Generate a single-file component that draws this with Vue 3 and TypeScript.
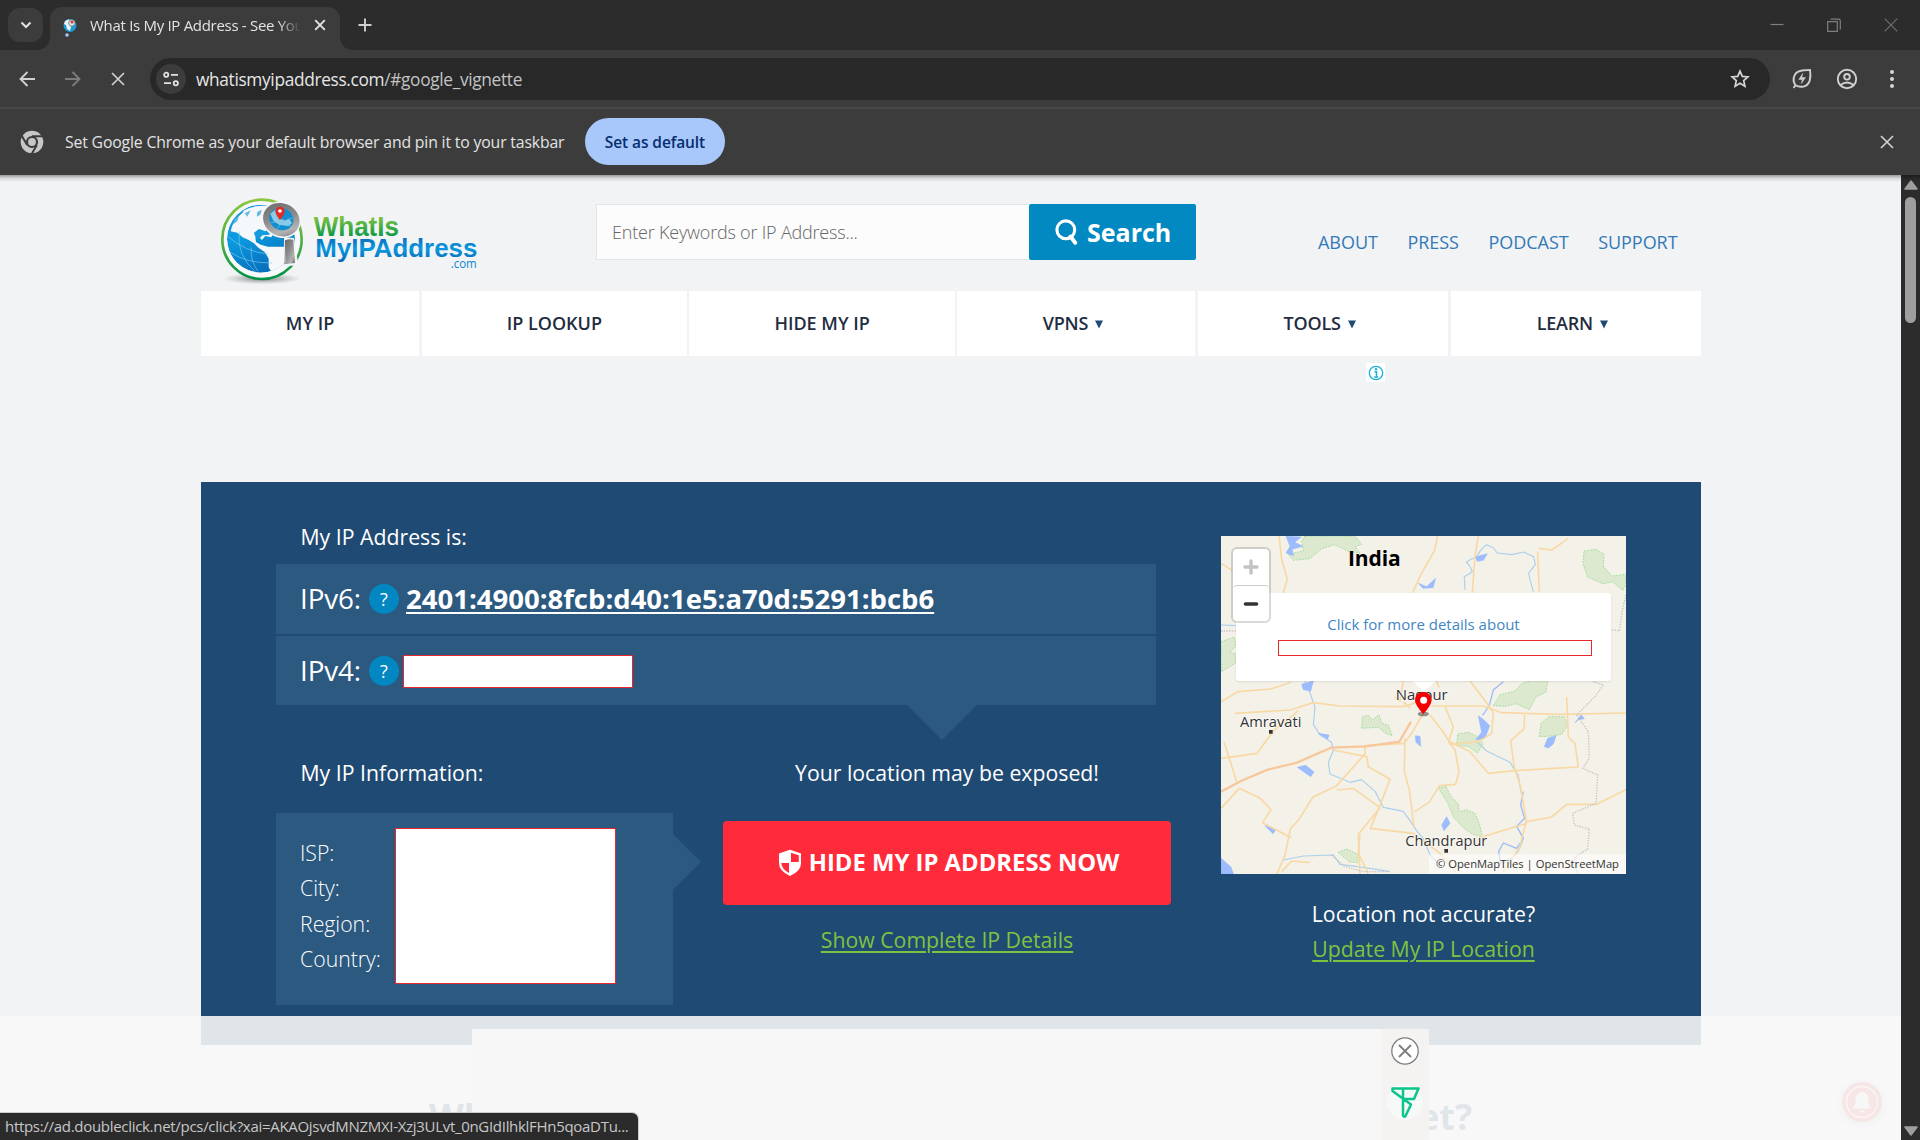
<script setup lang="ts">
interface NavItem {
  label: string
  width: number
  menu?: boolean
}

const links: string[] = ['ABOUT', 'PRESS', 'PODCAST', 'SUPPORT']

const nav: NavItem[] = [
  { label: 'MY IP', width: 218 },
  { label: 'IP LOOKUP', width: 265 },
  { label: 'HIDE MY IP', width: 265 },
  { label: 'VPNS', width: 238, menu: true },
  { label: 'TOOLS', width: 250, menu: true },
  { label: 'LEARN', width: 250, menu: true },
]

const infoLabels: string[] = ['ISP:', 'City:', 'Region:', 'Country:']
</script>

<template>
  <div class="window">
    <div class="tabstrip">
      <div class="tab-search">
        <svg width="12" height="8" viewBox="0 0 12 8"><path d="M1.500 1.500 6 6l4.500-4.500" fill="none" stroke="#e3e3e3" stroke-width="2" /></svg>
      </div>
      <div class="tab">
        <svg class="favicon" width="16" height="20" viewBox="0 0 16 20">
          <circle cx="8" cy="7.500" r="6.500" fill="#1d9ad6" />
          <path d="M3 3q4-3 6 0l-2 3 2 3-1 4-3-2-1-4-2-1z" fill="#eef4f6" />
          <circle cx="9.800" cy="5" r="3.200" fill="#d9e4ea" stroke="#777" stroke-width=".8" />
          <circle cx="10" cy="4" r="1.500" fill="#d63a2a" />
          <circle cx="5" cy="17" r="1.800" fill="#a8c7fa" />
        </svg>
        <span class="tab-title">What Is My IP Address - See Your</span>
        <svg class="tab-x" width="12" height="12" viewBox="0 0 12 12"><path d="m1.200 1.200 9.600 9.600m0-9.600-9.600 9.600" stroke="#e3e3e3" stroke-width="1.900" /></svg>
      </div>
      <svg class="plus" width="14" height="14" viewBox="0 0 14 14"><path d="M7 .5v13M.5 7h13" stroke="#d0d0d0" stroke-width="1.900" /></svg>
      <div class="win-buttons">
        <svg width="14" height="14" viewBox="0 0 14 14"><path d="M.5 6.500h13" stroke="#7f7f7f" stroke-width="1.200" /></svg>
        <svg width="14" height="14" viewBox="0 0 14 14"><path d="M.7 3.700h9.600v9.600H.7zM3.500 1.200h8q1.800 0 1.800 1.800v8.500" fill="none" stroke="#7f7f7f" stroke-width="1.200" /></svg>
        <svg width="14" height="14" viewBox="0 0 14 14"><path d="m.7.7 12.600 12.600m0-12.600L.7 13.300" stroke="#6f6f6f" stroke-width="1.200" /></svg>
      </div>
    </div>

    <div class="toolbar">
      <div class="nav-icons">
        <svg width="16" height="16" viewBox="0 0 16 16"><path d="M8.500 1 1.500 8l7 7M1.500 8H16" fill="none" stroke="#d0d0d0" stroke-width="1.900" /></svg>
        <svg width="16" height="16" viewBox="0 0 16 16"><path d="m7.500 1 7 7-7 7M14.500 8H0" fill="none" stroke="#7c7c7c" stroke-width="1.900" /></svg>
        <svg width="14" height="14" viewBox="0 0 14 14"><path d="m1 1 12 12M13 1 1 13" stroke="#d0d0d0" stroke-width="1.700" /></svg>
      </div>
      <div class="omnibox">
        <span class="site-info">
          <svg width="16" height="16" viewBox="0 0 16 16" fill="none" stroke="#e3e3e3" stroke-width="1.800">
            <circle cx="3.200" cy="3.800" r="2.100" /><path d="M8 3.800h7M1 12.200h7" /><circle cx="12.800" cy="12.200" r="2.100" />
          </svg>
        </span>
        <span class="url">whatismyipaddress.com<span>/#google_vignette</span></span>
        <svg class="star" width="20" height="20" viewBox="0 0 20 20"><path d="m10 2.200 2.300 5.200 5.600.5-4.200 3.700 1.200 5.600-4.900-2.900-4.900 2.900 1.200-5.600-4.200-3.700 5.600-.5z" fill="none" stroke="#d6d6d6" stroke-width="1.700" /></svg>
      </div>
      <div class="tool-icons">
        <svg width="22" height="22" viewBox="0 0 22 22" fill="none" stroke="#d0d0d0" stroke-width="1.900">
          <path d="M2.500 19.800 4.600 17.300Q2 14 2.700 9.800 4 3.500 11 2.500L19 1.900q1 6-.3 10.700-1.600 5-6.300 6-4.600.8-7.800-1.300" />
          <path d="m11.700 5.500-3.900 6h3.500l-1 4 4.200-6h-3.700z" fill="#d0d0d0" stroke-width=".5" />
        </svg>
        <svg width="22" height="22" viewBox="0 0 22 22" fill="none" stroke="#d0d0d0" stroke-width="1.900">
          <circle cx="11" cy="11" r="9.200" /><circle cx="11" cy="8.800" r="2.800" /><path d="M4.500 17q6.500-5 13 0" />
        </svg>
        <svg width="6" height="20" viewBox="0 0 6 20" fill="#d6d6d6"><circle cx="3" cy="3" r="2" /><circle cx="3" cy="10" r="2" /><circle cx="3" cy="17" r="2" /></svg>
      </div>
    </div>

    <div class="infobar">
      <svg class="chrome" width="24" height="24" viewBox="0 0 24 24">
        <circle cx="12" cy="12" r="11.300" fill="#c7c7c7" />
        <path d="M12 6.300h11M7.100 14.900 1.600 5.400M16.900 14.900l-5.500 9.500" stroke="#3c3c3c" stroke-width="2" />
        <circle cx="12" cy="12" r="5" fill="#c7c7c7" stroke="#3c3c3c" stroke-width="2.200" />
      </svg>
      <span class="info-text">Set Google Chrome as your default browser and pin it to your taskbar</span>
      <button class="set-default"><span>Set as default</span></button>
      <svg class="info-x" width="14" height="14" viewBox="0 0 14 14"><path d="m1 1 12 12M13 1 1 13" stroke="#d0d0d0" stroke-width="1.700" /></svg>
    </div>

    <div class="viewport">
      <main class="site">
        <header class="header">
          <svg class="logo" width="290" height="100" viewBox="0 0 870 300">
            <defs>
              <linearGradient id="ring" x1="0" y1="0" x2="0" y2="1"><stop offset="0" stop-color="#8cc63f" /><stop offset=".55" stop-color="#4fae45" /><stop offset="1" stop-color="#009245" /></linearGradient>
              <linearGradient id="sea" x1="0" y1="0" x2=".4" y2="1"><stop offset="0" stop-color="#1b9ddd" /><stop offset=".5" stop-color="#0a9ae0" /><stop offset="1" stop-color="#0871bd" /></linearGradient>
              <linearGradient id="metal" x1="0" y1="0" x2="1" y2="1"><stop offset="0" stop-color="#666" /><stop offset=".45" stop-color="#8b8b8b" /><stop offset=".75" stop-color="#b3b3b3" /><stop offset="1" stop-color="#666" /></linearGradient>
              <linearGradient id="green" gradientUnits="userSpaceOnUse" x1="0" y1="75" x2="0" y2="138"><stop offset="0" stop-color="#8cc63f" /><stop offset="1" stop-color="#0f9a47" /></linearGradient>
              <linearGradient id="blue" gradientUnits="userSpaceOnUse" x1="0" y1="145" x2="0" y2="215"><stop offset="0" stop-color="#0a6fbd" /><stop offset=".45" stop-color="#0a9ae0" /><stop offset="1" stop-color="#0765b2" /></linearGradient>
              <radialGradient id="shade"><stop offset="0" stop-color="#555" stop-opacity=".75" /><stop offset="1" stop-color="#888" stop-opacity="0" /></radialGradient>
              <clipPath id="globe"><circle cx="153" cy="146" r="102" /></clipPath>
            </defs>
            <ellipse cx="156" cy="266" rx="118" ry="17" fill="url(#shade)" />
            <circle cx="156" cy="148" r="119" fill="#f7f9fb" stroke="url(#ring)" stroke-width="8" />
            <g clip-path="url(#globe)">
              <circle cx="153" cy="146" r="102" fill="url(#sea)" />
              <path d="M100 62q40-22 90-12v60l-14 12 14 8-6 12-18-4-10 12-14-14-6 6 2 14 14 8 22 6h76v60l-20 30-34 14-8-22-12-20v-26l-12-20-18-12-14-14-16-10-18-8-16-14-20-4q4-30 38-58z" fill="#f4f8fa" />
              <path d="M74 87l13-9-5 16-13 9zM104 70l18-9-10 19zM142 66l13-7-4 15-11 6z" fill="#64b7e5" />
              <path d="M132 128l15-11 20 7 8-14 8 9-5 15-21 2-9 10-13-7z" fill="#149ade" />
              <path d="M55 140q50 45 118 52M58 185q50 35 128 34M88 125q-10 70 48 120M124 172q-4 40 20 72" fill="none" stroke="#7fc8ef" stroke-width="2" />
            </g>
            <path d="M222 142l30 2 13 82-42 3z" fill="#f4f6f8" />
            <ellipse cx="214" cy="89" rx="60" ry="54" fill="#f4f6f8" transform="rotate(25 214 89)" />
            <ellipse cx="214" cy="89" rx="56" ry="49" fill="url(#metal)" transform="rotate(25 214 89)" />
            <ellipse cx="214" cy="87" rx="37" ry="33" fill="#128fd1" transform="rotate(25 214 87)" />
            <path d="M181 71l19-15 20 8-8 23 12 6 14-6 8 13-12 8-27-4-17-12z" fill="#8fcbe9" />
            <path d="M183 98q34-8 60 12M202 116q18-28 46-32M190 84q28-2 51 21" fill="none" stroke="#82c7ea" stroke-width="2" />
            <path d="M210 91q-14-18-14-27a14 14 0 0 1 28 0q0 9-14 27z" fill="#e02c22" />
            <circle cx="210" cy="63" r="5.500" fill="#fff" />
            <path d="M225 151q12-5 25-2l5 70-32 4z" fill="url(#metal)" />
            <path d="M223 160l3 57" stroke="#fff" stroke-opacity=".35" stroke-width="4" />
            <g font-family="Liberation Sans, Arial, sans-serif">
              <text x="311" y="137" font-size="83" font-weight="700" textLength="256" lengthAdjust="spacingAndGlyphs" fill="url(#green)">WhatIs</text>
              <text x="316" y="202" font-size="80" font-weight="700" textLength="486" lengthAdjust="spacingAndGlyphs" fill="url(#blue)">MyIPAddress</text>
              <text x="722" y="233" font-size="38" font-family="Open Sans, sans-serif" textLength="78" lengthAdjust="spacingAndGlyphs" fill="#0f86cf">.com</text>
            </g>
          </svg>
          <div class="search">
            <div class="search-field">Enter Keywords or IP Address...</div>
            <button class="search-button">
              <svg width="24" height="26" viewBox="0 0 24 26"><circle cx="10.800" cy="10.800" r="8.900" fill="none" stroke="#fff" stroke-width="3.100" /><path d="m15.500 17.500 4.700 6.200" stroke="#fff" stroke-width="4" stroke-linecap="round" /></svg>
              <span>Search</span>
            </button>
          </div>
          <div class="links"><a v-for="l in links" :key="l">{{ l }}</a></div>
        </header>

        <nav class="nav">
          <div v-for="n in nav" :key="n.label" class="nav-item" :class="{ menu: n.menu }" :style="{ flexGrow: n.width }">
            <span>{{ n.label }}</span>
            <svg v-if="n.menu" width="8" height="9" viewBox="0 0 8 9"><path d="M0 .5h8L4 8.500z" fill="#1f4a73" /></svg>
          </div>
        </nav>

        <div class="ad-slot">
          <span class="ad-info">
            <svg width="16" height="16" viewBox="0 0 16 16"><circle cx="8" cy="8" r="6.700" fill="none" stroke="#1bb4d4" stroke-width="1.300" /><path d="M6.500 6.800h2v5M6.300 12h3.800" fill="none" stroke="#1bb4d4" stroke-width="1.500" /><circle cx="8" cy="4.200" r="1.200" fill="#1bb4d4" /></svg>
          </span>
        </div>

        <section class="panel">
          <div class="left">
            <div class="heading first">My IP Address is:</div>
            <div class="ips">
              <div class="ip-row"><span class="ver">IPv6:</span><span class="help">?</span><a class="ip">2401:4900:8fcb:d40:1e5:a70d:5291:bcb6</a></div>
              <div class="ip-row"><span class="ver">IPv4:</span><span class="help">?</span><span class="blank v4"></span></div>
            </div>
            <div class="lower">
              <div class="info-col">
                <div class="heading second">My IP Information:</div>
                <div class="info-box">
                  <div class="labels"><span v-for="l in infoLabels" :key="l">{{ l }}</span></div>
                  <span class="blank details"></span>
                </div>
              </div>
              <div class="cta">
                <div class="exposed"><span>Your location may be exposed!</span></div>
                <button class="hide">
                  <svg width="24" height="28" viewBox="0 0 24 28"><path d="M12 .7 1 4.500v10q0 7.500 11 12.500 11-5 11-12.500v-10z" fill="#fff" /><path d="M13 3.700 20.800 6.300V13H13zM11 14v10Q3.800 20 3.200 14z" fill="#ff2b3a" /></svg>
                  <span>HIDE MY IP ADDRESS NOW</span>
                </button>
                <a class="green">Show Complete IP Details</a>
              </div>
            </div>
          </div>

          <div class="right">
            <div class="map">
              <svg class="tiles" width="405" height="338" viewBox="33 33 1215 1014">
                <rect x="33" y="33" width="1215" height="1014" fill="#f4f1e9" />
                <g fill="#dde9cf" stroke="#8fd98a" stroke-width="2.500" stroke-dasharray="5 4">
                  <path d="M285 33l-10 15 5 30-45 10 15 18 50-5 35-30 40-12 40 20 35 5-15-18 20-8-20-25z" />
                  <path d="M1122 78l35-5 25 15-2 35 25 30 43-5v30l-10 18-30-25-30 5-45-20-14-40z" />
                  <path d="M33 350l40-14 5 28-20 16 20 6v28l-45 26z" />
                  <path d="M850 542l20-32 45-12 20-22 30-10h48l-5 35-30 15-20 38-40-18-30 8z" />
                  <path d="M988 635l5-40 25-20h45l10 25-18 28-30 5z" />
                  <path d="M455 610l2-35 18-5 10 15 22-15 8 25 20 5 12 32-22-8-20-17z" />
                  <path d="M740 662l3-35 32-5 25 12 20 22-18 28-28-20z" />
                  <path d="M686 790l22-6 15 32 22 20 3 24 20-6 28 12 12 30 10 40-30-8-26-18-30-32-18-42z" />
                  <path d="M385 982l25-10 35 17-3 24-25-3z" />
                </g>
                <g fill="none" stroke="#abd0ec" stroke-width="3.500" stroke-linejoin="round">
                  <path d="M765 195l-2-40 24-15-8-18-10-10 15-10 15-5 12-20 18-18 22 10 10 15 45 5 35-8 30 14 5 24-20 25 4 20 10 36" />
                  <path d="M285 468l15 35 15 45-5 50 20 32 35 22 5 25-15 35 5 35 60 25 35-8 40 35 25 48 60 12 20 28 20 30 20 24 20 48 30 32" />
                  <path d="M33 300l45 2M800 650l30 28 70 34 25 40 8 50M870 1015q60-15 70-80" />
                  <path d="M220 1005l60-12 90-3 20 28 90 12 60 10" />
                </g>
                <g fill="none" stroke="#9dbcf8" stroke-width="4"><path d="M880 470l-30 25-12 46-20 30M940 800l-8 40 12 40-24 24 20 36-20 30-40-16-14 25 5 34" /></g>
                <g fill="#9dbcff" stroke="#8db2f7" stroke-width="1.500">
                  <path d="M228 34l46 2-20 16 24 12-32 9 5 19-23-8 12-20zM796 96l36-10-12 20-18 3zM625 175l25 10 27-25-8 28-30 2zM275 478l35-10-8 30-22-4zM805 572l16 12 18 18-14 38-28 4 18-22zM1095 594l18-25 10 12-18 3zM1003 665l10-25 25-8-8 25-15 12zM616 632l14 2 2 30-14-12zM325 625l32 5-4 12zM262 727l25-6 25 20-10 14zM165 902l32 12-8 12zM695 900l15-25 10 20-18 22zM33 1000l30 26 7 21H33z" />
                </g>
                <g fill="none" stroke="#f8d9a5" stroke-width="5" stroke-linejoin="round">
                  <path d="M207 33l8 70 17 60-12 40M33 115l35 22M683 33l-10 45-40 70-25 55M805 33l-10 60-8 110M983 80l5 120M985 70l40 5 50-35" />
                  <path d="M33 530l50-30 100-8 60-20M75 565l165-10 70-22 80 10 190 2 50-15M665 543l155 0 55 20 170 5 205-4M33 700l108-15 50-68 75-60M42 650l38 120M580 468l-10 60-15-12M585 640l-2 100 15 55 14 110" />
                  <path d="M640 565l-32 55-25 35-118 7 0 25-85 95-72 35-40 65-27 30-15 75-25 60M380 795l50-5 80 58-65 80 5 120" />
                  <path d="M660 570l35 45 40 60 12 65-10 38-48 4-30 48-45 30M780 468l50 65 20 30-5 62-38 25-90 8" />
                  <path d="M720 650l60 30 55 65 80-8 115-7 75-4-10-70-20-20-5-120M944 570l-2 42-40 35 10 75 20 65 17 100-20 80-50 75" />
                  <path d="M950 890l75-14 45-38 90 0 90-45M950 895l-145 44M33 850l55-60 60 28 35 35-25 40 85 45" />
                  <path d="M370 675l100 20 5 30 65 38-35 90-25 60M480 910l130 15 80 60 50 60" />
                  <path d="M450 930l-5 55 30 60M215 1040l30-32 55 5M600 550l-20-20M680 468l7 20M705 545l25 60-15 50" />
                </g>
                <path d="M33 800l60-32 80-34 85-20 105-46 105-4 100-14 35-60" fill="none" stroke="#f7c79b" stroke-width="7" />
                <g fill="none" stroke="#c5c3c6" stroke-width="4" stroke-dasharray="4 4">
                  <path d="M1248 210l-10 40-10 68-30-5M1150 470l30 10-25 35-55 55 35 50 3 80-20 30 45 20-5 85-70 30 5 35 45 12-5 60-40 25 10 50M33 318l45 0M365 990l40 35 55 15 80 0" />
                </g>
                <g font-family="Open Sans, Noto Sans, sans-serif">
                  <text x="414" y="122" font-size="63" font-weight="700" textLength="158" fill="#000">India</text>
                  <g font-size="46" fill="#333" stroke="#fff" stroke-width="5" stroke-opacity=".7" paint-order="stroke" stroke-linejoin="round">
                    <text x="557" y="525" textLength="156" lengthAdjust="spacingAndGlyphs">Nagpur</text>
                    <text x="90" y="605" textLength="184" lengthAdjust="spacingAndGlyphs">Amravati</text>
                    <text x="586" y="963" textLength="246" lengthAdjust="spacingAndGlyphs">Chandrapur</text>
                  </g>
                  <path d="M177 615h11v11h-11zM703 972h11v11h-11z" fill="#333" />
                  <rect x="657" y="988" width="591" height="59" fill="#fff" fill-opacity=".55" />
                  <text x="678" y="1029" font-size="33" fill="#333" textLength="549" lengthAdjust="spacingAndGlyphs">© OpenMapTiles | OpenStreetMap</text>
                </g>
                <path d="M605 465h74l-37 36z" fill="#fff" />
                <ellipse cx="640" cy="567" rx="17" ry="7" fill="#000" fill-opacity=".4" />
                <path d="M640 567q-25-27-25-43a25 23 0 0 1 50 0q0 16-25 43z" fill="#f50000" />
                <circle cx="641" cy="526" r="10.500" fill="#fff" />
              </svg>
              <div class="popup"><span>Click for more details about</span><i></i></div>
              <div class="zoom">
                <span><svg width="16" height="16" viewBox="0 0 16 16"><path d="M8 2v12M2 8h12" stroke="#c3c3c3" stroke-width="3.400" stroke-linecap="round" /></svg></span>
                <span><svg width="16" height="16" viewBox="0 0 16 16"><path d="M2.500 8h11" stroke="#333" stroke-width="3.600" stroke-linecap="round" /></svg></span>
              </div>
            </div>
            <div class="accuracy">Location not accurate?</div>
            <a class="green update">Update My IP Location</a>
          </div>
        </section>

        <div class="headline"><span class="h-left">What</span><span class="h-right">et?</span></div>
      </main>

      <div class="scrollbar">
        <svg width="14" height="10" viewBox="0 0 14 10"><path d="M7 1 13 9H1z" fill="#9f9f9f" stroke="#9f9f9f" stroke-width="1.500" stroke-linejoin="round" /></svg>
        <div class="thumb"></div>
        <svg width="14" height="10" viewBox="0 0 14 10"><path d="M7 9 13 1H1z" fill="#9f9f9f" stroke="#9f9f9f" stroke-width="1.500" stroke-linejoin="round" /></svg>
      </div>

      <div class="sticky-ad">
        <div class="ad-body"></div>
        <div class="ad-strip">
          <svg width="28" height="28" viewBox="0 0 28 28"><circle cx="14" cy="14" r="13.200" fill="#fff" stroke="#7e7e7e" stroke-width="1.300" /><path d="m8 8 12 12m0-12L8 20" stroke="#7e7e7e" stroke-width="1.800" /></svg>
          <svg class="brand" width="36" height="36" viewBox="0 0 36 36"><circle cx="18" cy="18" r="18" fill="#f7f8f8" /><path d="M5.500 4.500h26l-4.500 10.500H16.500M5.500 4.500v2.500l18.500 13.500-5.500 11.500q-1.500 1.500-2.500-.5V5" fill="none" stroke="#0cc58c" stroke-width="2.500" stroke-linejoin="round" stroke-linecap="round" /></svg>
        </div>
      </div>

      <div class="bell">
        <svg width="40" height="40" viewBox="0 0 40 40"><circle cx="20" cy="20" r="20" fill="#f7e6e6" /><circle cx="20" cy="20" r="15.500" fill="none" stroke="#fbf6f6" stroke-width="1.300" /><path d="M10.500 26.500q3-2.500 3-6v-3q0-6.500 6.500-7.500 6.500 1 6.500 7.500v3q0 3.500 3 6zM17 28.200h6q-1 2.300-3 2.300t-3-2.300z" fill="#f8f7f7" /></svg>
      </div>

      <div class="status"><span>https://ad.doubleclick.net/pcs/click?xai=AKAOjsvdMNZMXI-Xzj3ULvt_0nGIdIlhklFHn5qoaDTu...</span></div>
    </div>
  </div>
</template>

<style>
html, body { margin: 0; overflow: hidden; background: #f1f3f5; }
</style>

<style scoped>
* { box-sizing: border-box; }
svg { display: block; flex: none; }
span, a { white-space: nowrap; }
button { border: 0; padding: 0; font: inherit; }
.window { width: 1920px; height: 1140px; display: flex; flex-direction: column; overflow: hidden; font-family: "Open Sans", "Noto Sans", sans-serif; }

.tabstrip { height: 50px; flex: none; background: #2c2c2c; display: flex; align-items: center; padding-left: 8px; }
.tab-search { width: 35px; height: 34px; border-radius: 12px; background: #3c3c3c; display: flex; align-items: center; justify-content: center; }
.tab { position: relative; align-self: flex-end; margin-left: 7px; width: 290px; height: 43px; background: #3c3c3c; border-radius: 12px 12px 0 0; display: flex; align-items: center; padding: 0 14px 7px 12px; }
.tab::before, .tab::after { content: ""; position: absolute; bottom: 0; width: 12px; height: 12px; }
.tab::before { left: -12px; background: radial-gradient(circle at 0 0, transparent 11.500px, #3c3c3c 12px); }
.tab::after { right: -12px; background: radial-gradient(circle at 100% 0, transparent 11.500px, #3c3c3c 12px); }
.favicon { margin-top: 6px; }
.tab-title { margin-left: 12px; margin-top: -1px; width: 211px; overflow: hidden; font-size: 15px; letter-spacing: -.3px; color: #e3e3e3; mask-image: linear-gradient(90deg, #000 188px, transparent 211px); }
.tab-x { margin-left: 13px; }
.plus { margin-left: 18px; }
.win-buttons { margin-left: auto; display: flex; gap: 43px; padding-right: 22px; }

.toolbar { height: 59px; flex: none; background: #3c3c3c; border-bottom: 2px solid #474747; display: flex; align-items: center; }
.nav-icons { width: 150px; padding-left: 19px; display: flex; gap: 30px; align-items: center; }
.omnibox { width: 1620px; height: 42px; background: #282828; border-radius: 21px; display: flex; align-items: center; padding: 0 20px 0 6px; }
.site-info { width: 30px; height: 30px; border-radius: 50%; background: #3c3c3c; display: flex; align-items: center; justify-content: center; }
.url { margin: 1px 0 0 10px; font-size: 17.300px; letter-spacing: -.33px; color: #e6e6e6; }
.url span { color: #c3c3c3; }
.star { margin-left: auto; }
.tool-icons { display: flex; align-items: center; padding-left: 21px; gap: 23px; }
.tool-icons svg:last-child { margin-left: 8px; }

.infobar { height: 66px; flex: none; background: #3c3c3c; display: flex; align-items: center; padding: 0 26px 1px 20px; position: relative; z-index: 2; }
.infobar::after { content: ""; position: absolute; left: 0; right: 0; top: 100%; height: 7px; background: linear-gradient(rgba(0, 0, 0, .36), rgba(0, 0, 0, .1) 50%, transparent); }
.info-text { margin-left: 21px; width: 520px; font-size: 15.800px; letter-spacing: -.17px; color: #e3e3e3; }
.set-default { width: 140px; height: 47px; border-radius: 24px; background: #a8c7fa; color: #062e6f; font-size: 15.500px; font-weight: 600; letter-spacing: -.1px; }
.info-x { margin-left: auto; }

.viewport { position: relative; flex: 1; display: flex; background: #f1f3f5; overflow: hidden; }
.site { width: 1901px; padding-left: 201px; }
.site > * { width: 1500px; }
.header { height: 116px; display: flex; }
.logo { margin: 15px 0 0 9px; }
.search { margin: 29px 0 0 96px; width: 600px; height: 56px; display: flex; }
.search-field { width: 433px; border: 1px solid #e4e5e6; border-right: 0; background: #fcfcfc; padding-left: 15px; line-height: 54px; font-size: 18px; letter-spacing: -.2px; font-weight: 300; color: #666; }
.search-button { width: 167px; background: #0289c1; border-radius: 2px; color: #fff; font-size: 25px; font-weight: 700; display: flex; align-items: center; padding-left: 26px; gap: 8px; }
.links { margin-left: 122px; padding-top: 53px; line-height: 28px; font-size: 18px; letter-spacing: -.03px; color: #337ab7; display: flex; gap: 29.500px; }

.nav { height: 65px; display: flex; gap: 2.500px; }
.nav-item { flex-basis: 0; background: #fff; display: flex; align-items: center; justify-content: center; gap: 7px; font-size: 18px; font-weight: 600; color: #1f2d3f; padding-bottom: 2px; }
.nav-item.menu { letter-spacing: -.2px; }
.nav-item svg { margin: 3px 7px 0 0; }
.ad-slot { height: 126px; display: flex; justify-content: flex-end; }
.ad-info { width: 19px; height: 19px; margin: 7px 316px 0 0; background: #fff; display: flex; align-items: center; justify-content: center; }

.panel { height: 563px; background: #1f4a73; display: flex; color: #fff; padding-left: 75px; }
.left { width: 880px; }
.heading { font-size: 21.250px; line-height: 30px; padding-left: 24.500px; }
.first { height: 82px; padding-top: 40px; }
.second { height: 108px; padding-top: 53px; }
.ips { display: flex; flex-direction: column; gap: 2px; position: relative; }
.ips::after { content: ""; position: absolute; left: 631px; top: 141px; border: 35px solid transparent; border-top-color: #2c5980; border-bottom: 0; }
.ip-row { height: 70px; background: #2c5980; display: flex; align-items: center; padding-left: 24px; }
.ip-row + .ip-row { height: 69px; }
.ver { width: 69px; font-size: 27.800px; margin-top: -2px; letter-spacing: -.1px; }
.ip-row + .ip-row .ver { margin-top: -1px; }
.help { width: 30px; height: 30px; border-radius: 50%; background: #0287c1; font-size: 18px; line-height: 31px; text-align: center; }
.ip { margin: -2px 0 0 7px; font-size: 27.500px; font-weight: 700; text-decoration: underline; text-decoration-thickness: 2px; text-underline-offset: 3px; }
.blank { background: #fff; border: 1px solid #e8272c; }
.v4 { margin: 1px 0 0 4px; width: 230px; height: 33px; }
.lower { display: flex; gap: 50px; width: 895px; }
.info-col { width: 397px; }
.info-box { position: relative; height: 192px; background: #2c5980; padding: 15px 0 0 24px; display: flex; }
.info-box::after { content: ""; position: absolute; left: 397px; top: 21px; border: 28.500px solid transparent; border-left-color: #2c5980; border-right: 0; }
.labels { width: 95px; padding-top: 7px; display: flex; flex-direction: column; font-size: 21.250px; font-weight: 300; line-height: 35.300px; }
.details { width: 221px; height: 156px; border-width: 1.500px; }
.cta { width: 448px; display: flex; flex-direction: column; align-items: center; }
.exposed { height: 116px; padding-top: 53px; font-size: 21.250px; line-height: 30px; }
.hide { width: 448px; height: 84px; border-radius: 4px; background: #ff2b3a; color: #fff; font-size: 23.850px; font-weight: 700; display: flex; align-items: center; justify-content: center; gap: 7px; padding-left: 3px; }
.hide span { margin-top: -2px; }
.green { color: #7fc241; font-size: 21.250px; line-height: 30px; text-decoration: underline; text-decoration-thickness: 2px; text-underline-offset: 3px; }
.cta .green { margin-top: 20px; }
.right { margin-left: 65px; width: 405px; padding-top: 54px; display: flex; flex-direction: column; align-items: center; }
.map { position: relative; width: 405px; height: 338px; overflow: hidden; }
.popup { position: absolute; left: 15px; top: 57px; width: 375px; height: 88px; background: #fff; border-radius: 3px; box-shadow: 0 1px 2px rgba(0, 0, 0, .1); display: flex; flex-direction: column; padding-top: 19px; align-items: center; font-size: 15px; line-height: 24px; color: #3f87c4; }
.popup i { width: 314px; height: 16px; border: 1px solid #e8272c; margin: 4px 0 0 23px; }
.zoom { position: absolute; left: 10px; top: 11px; width: 40px; height: 76px; border: 2px solid rgba(0, 0, 0, .15); border-radius: 6px; background: #fff; background-clip: padding-box; }
.zoom span { height: 36px; display: flex; align-items: center; justify-content: center; }
.zoom span + span { border-top: 1px solid #ccc; border-radius: 4px; }
.accuracy { margin-top: 25px; font-size: 21.250px; line-height: 30px; }
.update { margin-top: 5px; }

.headline { padding: 47px 0 0 228px; display: flex; font-size: 36px; line-height: 50px; font-weight: 700; color: #1f4a73; }
.h-left { width: 43px; overflow: hidden; }
.h-right { margin-left: 946px; }

.scrollbar { width: 19px; background: #2c2c2c; display: flex; flex-direction: column; align-items: center; padding: 5px 0 4px; position: relative; z-index: 1; }
.thumb { width: 11px; height: 126px; border-radius: 6px; background: #9f9f9f; margin: 7px 0 auto; }

.sticky-ad { position: absolute; left: 0; right: 19px; bottom: 0; height: 124px; padding: 13px 0 0 472px; display: flex; background: rgba(248, 248, 248, .89); }
.ad-body { width: 910px; background: #f7f7f7; }
.ad-strip { width: 47px; background: #f4f3f2; display: flex; flex-direction: column; align-items: center; padding: 8px 2px 0 0; }
.brand { margin-top: 19px; }
.bell { position: absolute; left: 1842px; top: 907px; border-radius: 50%; box-shadow: 0 2px 12px rgba(0, 0, 0, .04); }
.status { position: absolute; left: 0; bottom: 0; width: 638px; height: 27px; background: #2b2b2b; border-top-right-radius: 6px; box-shadow: 0 0 0 1px #c9cbcc; color: #c7c7c7; padding-left: 5px; font-size: 15px; line-height: 27px; letter-spacing: -.3px; }
</style>
